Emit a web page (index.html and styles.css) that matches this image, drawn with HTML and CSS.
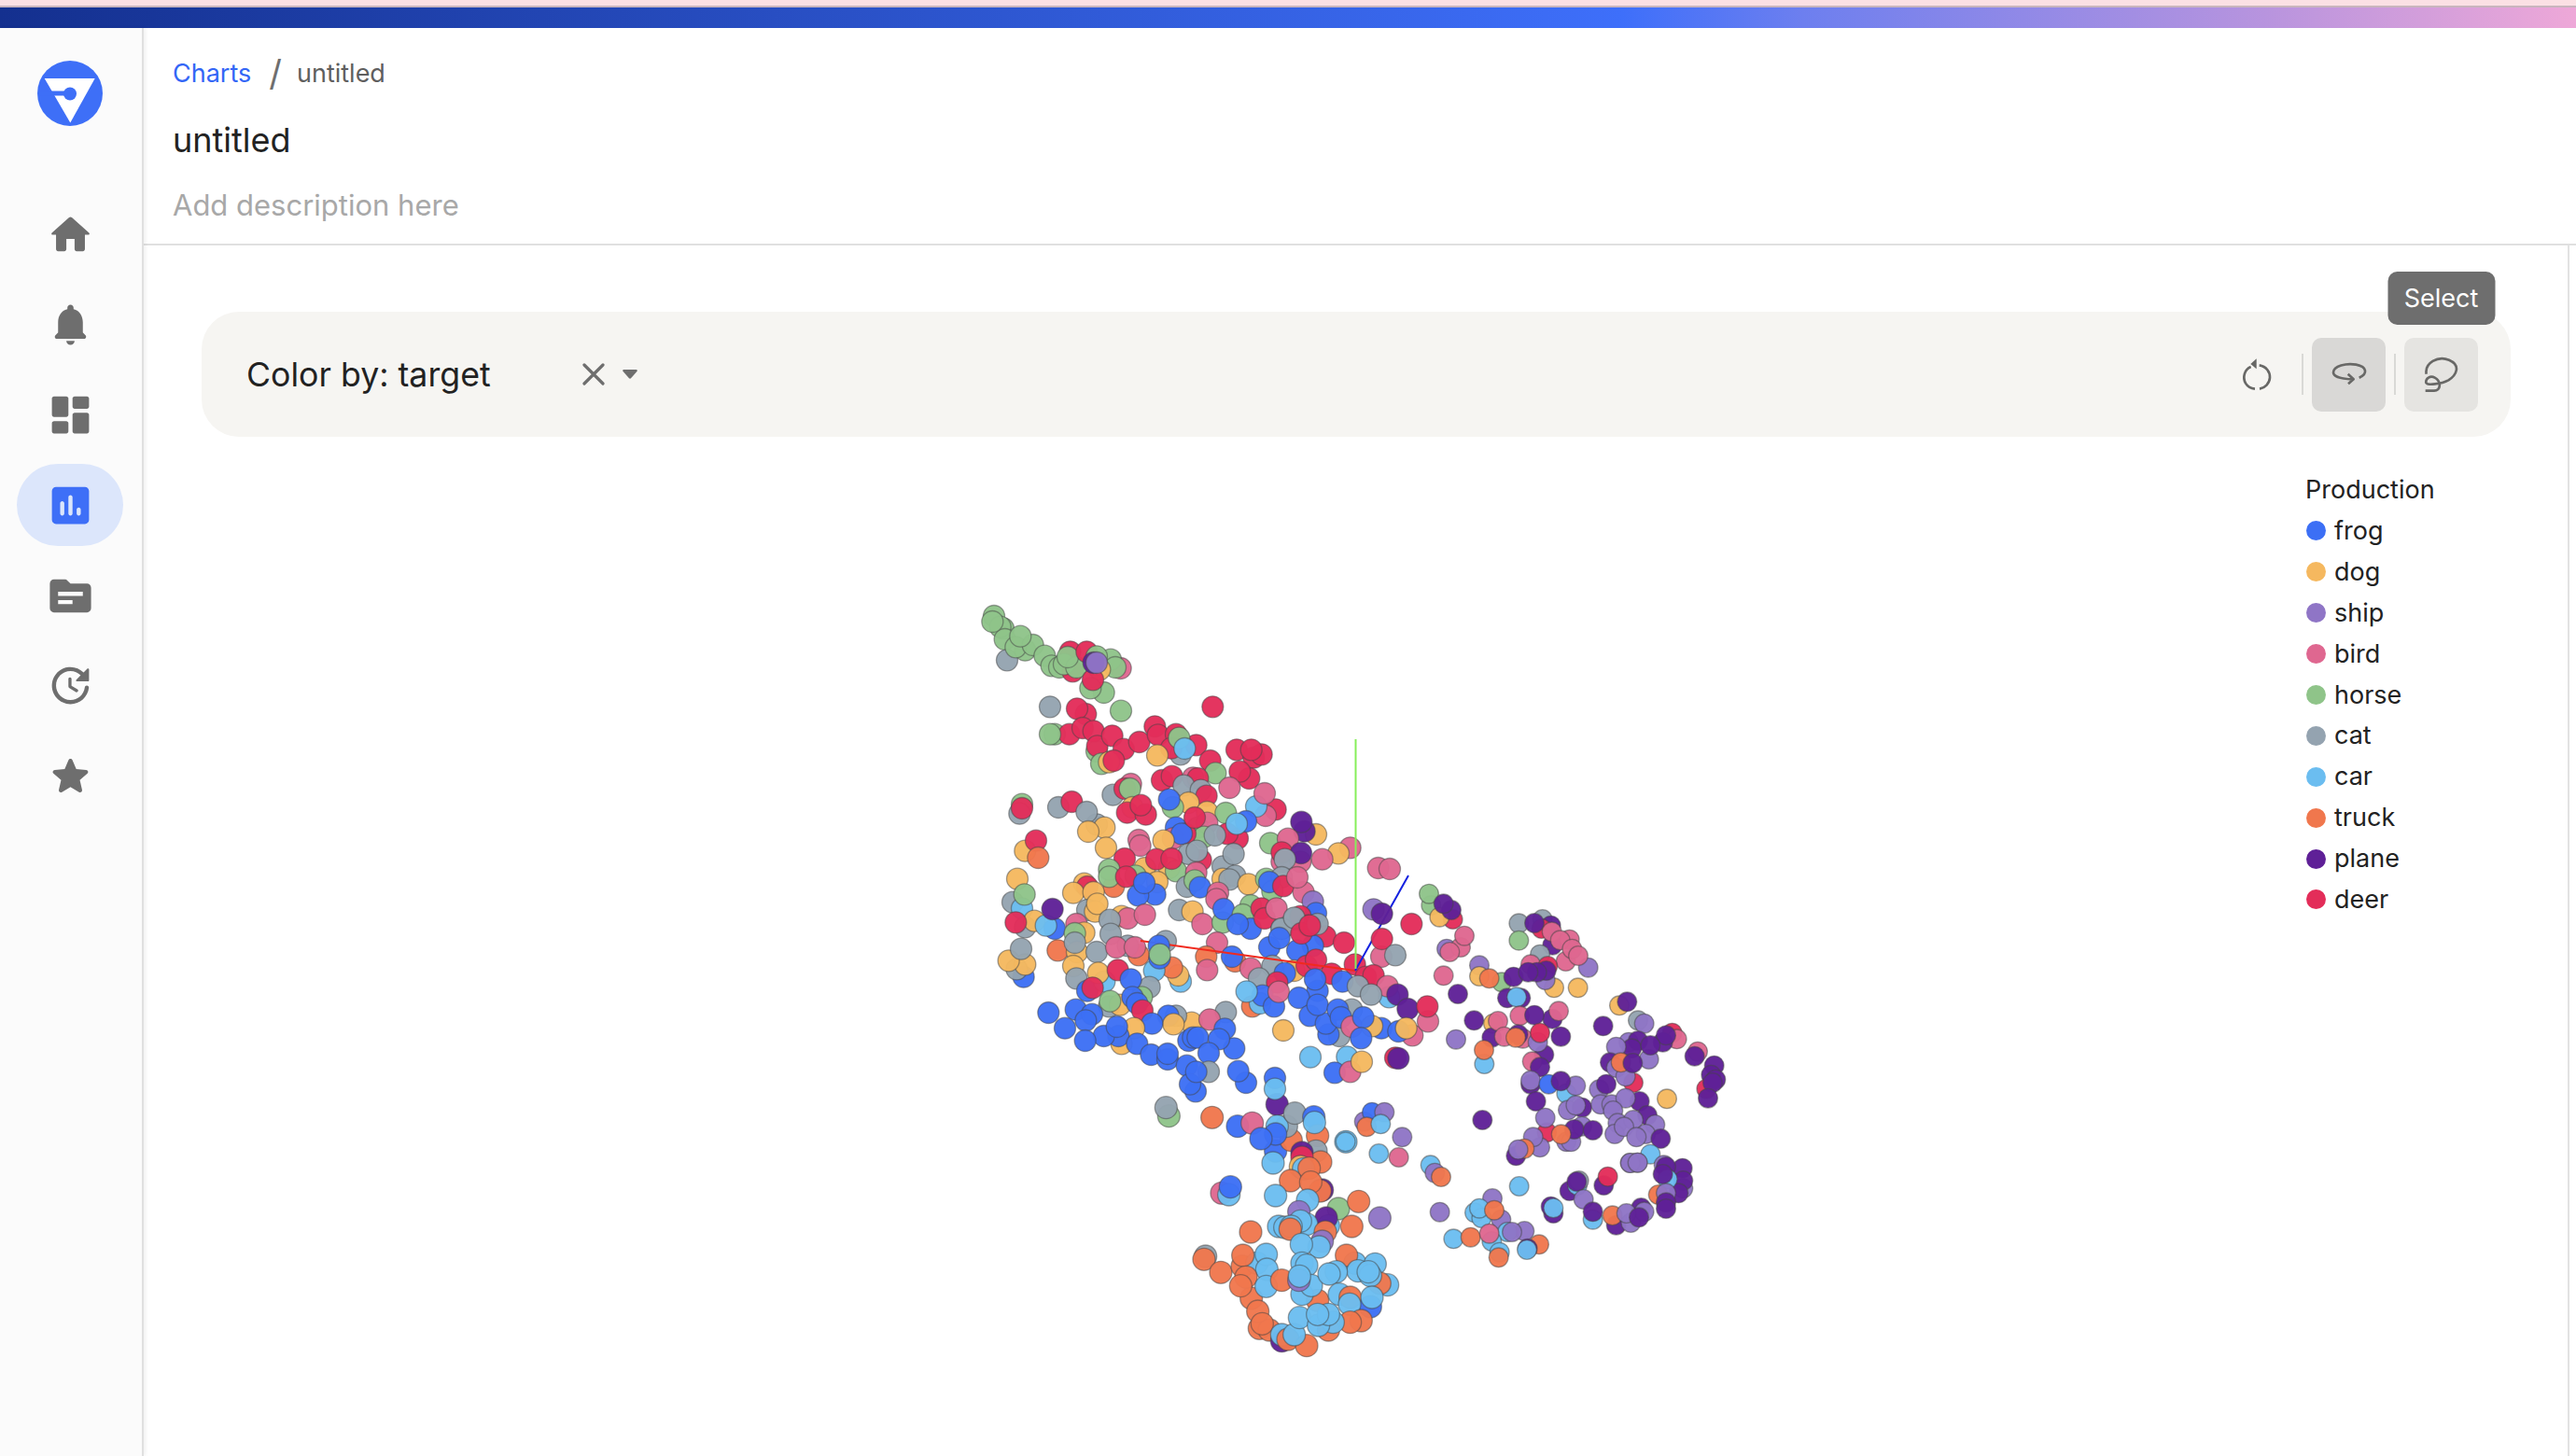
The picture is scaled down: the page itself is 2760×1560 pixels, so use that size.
FILE: index.html
```html
<!DOCTYPE html>
<html lang="en">
<head>
<meta charset="utf-8">
<title>untitled</title>
<link rel="stylesheet" href="styles.css">
</head>
<body>
<div class="app">
  <div class="topstrip"></div>
  <div class="topbar"></div>
  <div class="body">
    <aside class="sidebar">
      <svg class="logo" viewBox="0 0 70 70">
        <circle cx="35" cy="35" r="35" fill="#3e6ff7"/>
        <path d="M7.7 19h54l-26.400 47.400z" fill="#fff"/>
        <path d="M2 35h33" stroke="#3e6ff7" stroke-width="5" fill="none"/>
        <circle cx="35" cy="35.500" r="7" fill="#3e6ff7"/>
      </svg>
      <nav class="nav">
        <a class="nav-item"><svg class="nav-icon" viewBox="0 0 24 24"><path d="M10 19v-5h4v5c0 .55.45 1 1 1h3c.55 0 1-.45 1-1v-7h1.700c.46 0 .68-.57.33-.87L12.670 3.600c-.38-.34-.96-.34-1.340 0l-8.360 7.530c-.34.3-.13.87.33.87H5v7c0 .55.45 1 1 1h3c.55 0 1-.45 1-1z"/></svg></a>
        <a class="nav-item"><svg class="nav-icon" viewBox="0 0 24 24"><path d="M12 22c1.100 0 2-.9 2-2h-4c0 1.100.9 2 2 2zm6-6v-5c0-3.070-1.630-5.640-4.500-6.320V4c0-.83-.67-1.500-1.500-1.500s-1.500.67-1.500 1.500v.68C7.640 5.360 6 7.920 6 11v5l-1.290 1.290c-.63.63-.19 1.710.7 1.710h13.170c.89 0 1.340-1.080.71-1.710L18 16z"/></svg></a>
        <a class="nav-item"><svg class="nav-icon" viewBox="0 0 24 24"><path d="M4 13h6c.55 0 1-.45 1-1V4c0-.55-.45-1-1-1H4c-.55 0-1 .45-1 1v8c0 .55.45 1 1 1zm0 8h6c.55 0 1-.45 1-1v-4c0-.55-.45-1-1-1H4c-.55 0-1 .45-1 1v4c0 .55.45 1 1 1zm10 0h6c.55 0 1-.45 1-1v-8c0-.55-.45-1-1-1h-6c-.55 0-1 .45-1 1v8c0 .55.45 1 1 1zM13 4v4c0 .55.45 1 1 1h6c.55 0 1-.45 1-1V4c0-.55-.45-1-1-1h-6c-.55 0-1 .45-1 1z"/></svg></a>
        <a class="nav-item active"><svg class="nav-icon" viewBox="0 0 24 24"><path d="M19 3H5c-1.100 0-2 .9-2 2v14c0 1.100.9 2 2 2h14c1.100 0 2-.9 2-2V5c0-1.100-.9-2-2-2zM8 17c-.55 0-1-.45-1-1v-5c0-.55.45-1 1-1s1 .45 1 1v5c0 .55-.45 1-1 1zm4 0c-.55 0-1-.45-1-1V8c0-.55.45-1 1-1s1 .45 1 1v8c0 .55-.45 1-1 1zm4 0c-.55 0-1-.45-1-1v-2c0-.55.45-1 1-1s1 .45 1 1v2c0 .55-.45 1-1 1z"/></svg></a>
        <a class="nav-item"><svg class="nav-icon" viewBox="0 0 24 24"><path d="M20 6h-8l-1.410-1.410C10.210 4.210 9.700 4 9.170 4H4c-1.100 0-2 .9-2 2v12c0 1.100.9 2 2 2h16c1.100 0 2-.9 2-2V8c0-1.100-.9-2-2-2zm-7 10H6v-2h7v2zm5-4H6v-2h12v2z"/></svg></a>
        <a class="nav-item"><svg class="nav-icon" viewBox="0 0 24 24"><path d="M11 8.750v3.680c0 .35.19.68.49.86l3.120 1.850c.36.21.82.09 1.030-.26.21-.36.1-.82-.26-1.030l-2.870-1.710v-3.400c0-.4-.34-.74-.75-.74s-.76.34-.76.75zm10 .75V4.210c0-.45-.54-.67-.85-.35l-1.780 1.780c-1.810-1.810-4.390-2.850-7.210-2.600-4.190.38-7.640 3.750-8.100 7.940C2.460 16.400 6.690 21 12 21c4.590 0 8.380-3.440 8.930-7.880.07-.6-.4-1.120-1-1.120-.5 0-.92.37-.98.86-.43 3.490-3.440 6.190-7.050 6.140-3.710-.05-6.840-3.180-6.900-6.900C4.940 8.200 8.110 5 12 5c1.930 0 3.680.79 4.950 2.050l-2.090 2.090c-.32.32-.1.86.35.86h5.290c.28 0 .5-.22.5-.5z"/></svg></a>
        <a class="nav-item"><svg class="nav-icon" viewBox="0 0 24 24"><path d="M12 17.270l4.150 2.510c.76.46 1.690-.22 1.490-1.080l-1.100-4.720 3.670-3.180c.67-.58.31-1.680-.57-1.750l-4.830-.41-1.890-4.460c-.34-.81-1.500-.81-1.840 0L9.190 8.630l-4.830.41c-.88.07-1.240 1.170-.57 1.750l3.670 3.180-1.100 4.720c-.2.86.73 1.540 1.490 1.080l4.150-2.500z"/></svg></a>
      </nav>
    </aside>
    <main class="main">
      <header class="header">
        <div class="crumbs"><a class="crumb-link">Charts</a><span class="crumb-sep">/</span><span class="crumb-current">untitled</span></div>
        <h1 class="title">untitled</h1>
        <p class="desc">Add description here</p>
      </header>
      <section class="content">
        <svg class="plot" viewBox="154 263 2606 1297">
          <g class="mid" transform="translate(1030 630) scale(.33333)">
            <circle class="ho" cx="105" cy="90"/><circle class="ho" cx="135" cy="130"/><circle class="ho" cx="125" cy="125"/><circle class="ho" cx="140" cy="165"/><circle class="ho" cx="100" cy="108"/><circle class="ca" cx="147" cy="232"/><circle class="ho" cx="205" cy="200"/><circle class="ho" cx="175" cy="190"/><circle class="ho" cx="230" cy="183"/><circle class="ho" cx="190" cy="155"/><circle class="ho" cx="268" cy="218"/><circle class="ho" cx="290" cy="250"/><circle class="ho" cx="315" cy="255"/><circle class="de" cx="350" cy="205"/><circle class="de" cx="358" cy="268"/><circle class="ho" cx="330" cy="245"/><circle class="ho" cx="370" cy="255"/><circle class="ho" cx="342" cy="222"/><circle class="de" cx="403" cy="205"/><circle class="bi" cx="512" cy="258"/><circle class="ho" cx="480" cy="230"/><circle class="ho" cx="495" cy="255"/><circle class="ho" cx="435" cy="220"/><circle class="do" cx="445" cy="262"/><circle class="ho" cx="458" cy="336"/><circle class="ho" cx="415" cy="322"/><circle class="de" cx="423" cy="295"/><circle class="pl" cx="425" cy="240"/><circle class="sh" cx="435" cy="240"/>
            <circle class="ca" cx="285" cy="382"/><circle class="de" cx="400" cy="405"/><circle class="de" cx="372" cy="388"/><circle class="ho" cx="513" cy="395"/><circle class="de" cx="808" cy="382"/>
            <circle class="ho" cx="435" cy="525"/><circle class="ho" cx="300" cy="470"/><circle class="de" cx="347" cy="470"/><circle class="ho" cx="285" cy="470"/><circle class="de" cx="390" cy="450"/><circle class="de" cx="425" cy="460"/><circle class="de" cx="437" cy="508"/><circle class="de" cx="485" cy="475"/><circle class="de" cx="522" cy="518"/><circle class="de" cx="572" cy="495"/><circle class="de" cx="622" cy="445"/><circle class="de" cx="632" cy="472"/><circle class="ca" cx="705" cy="535"/><circle class="de" cx="755" cy="505"/><circle class="de" cx="690" cy="470"/><circle class="de" cx="675" cy="515"/><circle class="do" cx="630" cy="538"/><circle class="ho" cx="700" cy="482"/><circle class="cr" cx="718" cy="516"/>
            <circle class="ho" cx="450" cy="565"/><circle class="do" cx="475" cy="560"/><circle class="de" cx="490" cy="555"/>
            <circle class="de" cx="800" cy="555"/><circle class="de" cx="885" cy="520"/><circle class="de" cx="940" cy="545"/><circle class="de" cx="965" cy="535"/><circle class="de" cx="932" cy="520"/><circle class="de" cx="925" cy="612"/><circle class="ho" cx="817" cy="595"/><circle class="de" cx="895" cy="590"/><circle class="bi" cx="862" cy="642"/>
            <circle class="de" cx="645" cy="618"/><circle class="de" cx="677" cy="605"/><circle class="bi" cx="745" cy="610"/><circle class="de" cx="760" cy="612"/><circle class="ca" cx="715" cy="635"/><circle class="ca" cx="770" cy="650"/><circle class="de" cx="788" cy="668"/><circle class="do" cx="730" cy="690"/><circle class="ho" cx="680" cy="705"/><circle class="fr" cx="668" cy="680"/><circle class="do" cx="790" cy="720"/><circle class="ho" cx="850" cy="723"/>
            <circle class="bi" cx="545" cy="630"/><circle class="ca" cx="487" cy="665"/><circle class="de" cx="525" cy="645"/><circle class="ho" cx="542" cy="645"/><circle class="do" cx="550" cy="705"/><circle class="de" cx="533" cy="722"/><circle class="de" cx="593" cy="728"/><circle class="de" cx="577" cy="698"/>
            <circle class="ho" cx="195" cy="695"/><circle class="ca" cx="187" cy="725"/><circle class="de" cx="195" cy="708"/><circle class="ca" cx="312" cy="705"/><circle class="de" cx="355" cy="687"/><circle class="ca" cx="435" cy="760"/><circle class="ca" cx="403" cy="720"/><circle class="do" cx="460" cy="770"/><circle class="do" cx="408" cy="783"/>
            <circle class="de" cx="1010" cy="712"/><circle class="bi" cx="978" cy="732"/><circle class="cr" cx="948" cy="702"/><circle class="bi" cx="975" cy="660"/><circle class="de" cx="888" cy="805"/><circle class="de" cx="855" cy="790"/><circle class="fr" cx="915" cy="750"/><circle class="cr" cx="885" cy="758"/>
            <circle class="do" cx="1140" cy="792"/><circle class="pl" cx="1103" cy="782"/><circle class="pl" cx="1093" cy="752"/><circle class="ho" cx="993" cy="820"/><circle class="bi" cx="1050" cy="806"/><circle class="bi" cx="1250" cy="835"/><circle class="do" cx="1212" cy="853"/><circle class="bi" cx="1160" cy="872"/><circle class="bi" cx="1030" cy="880"/><circle class="bi" cx="1090" cy="880"/><circle class="de" cx="1030" cy="850"/><circle class="pl" cx="1092" cy="852"/><circle class="ca" cx="1040" cy="872"/><circle class="bi" cx="1340" cy="900"/><circle class="bi" cx="1377" cy="903"/>
            <circle class="fr" cx="690" cy="770"/><circle class="ho" cx="760" cy="770"/><circle class="bi" cx="790" cy="755"/><circle class="ho" cx="780" cy="800"/><circle class="ca" cx="815" cy="795"/><circle class="bi" cx="680" cy="805"/><circle class="de" cx="720" cy="790"/><circle class="fr" cx="708" cy="790"/><circle class="de" cx="750" cy="738"/>
            <circle class="do" cx="205" cy="845"/><circle class="de" cx="240" cy="812"/><circle class="tr" cx="247" cy="867"/><circle class="do" cx="465" cy="835"/><circle class="bi" cx="570" cy="810"/><circle class="bi" cx="575" cy="828"/><circle class="do" cx="650" cy="812"/><circle class="de" cx="770" cy="875"/><circle class="ca" cx="730" cy="855"/><circle class="ca" cx="757" cy="845"/><circle class="do" cx="590" cy="900"/><circle class="do" cx="668" cy="900"/><circle class="ho" cx="690" cy="910"/><circle class="de" cx="525" cy="870"/><circle class="de" cx="627" cy="872"/><circle class="de" cx="676" cy="870"/><circle class="ca" cx="840" cy="895"/><circle class="ca" cx="875" cy="855"/><circle class="do" cx="840" cy="935"/><circle class="ca" cx="880" cy="925"/><circle class="ca" cx="862" cy="937"/><circle class="do" cx="923" cy="952"/><circle class="ho" cx="980" cy="935"/>
            <circle class="do" cx="180" cy="935"/><circle class="tr" cx="490" cy="960"/><circle class="ho" cx="475" cy="905"/><circle class="ho" cx="475" cy="928"/><circle class="ho" cx="560" cy="925"/><circle class="do" cx="630" cy="945"/><circle class="de" cx="530" cy="928"/><circle class="fr" cx="623" cy="985"/><circle class="fr" cx="568" cy="988"/><circle class="fr" cx="588" cy="948"/>
            <circle class="do" cx="395" cy="950"/><circle class="de" cx="405" cy="960"/><circle class="do" cx="360" cy="980"/><circle class="do" cx="425" cy="978"/><circle class="ca" cx="725" cy="960"/><circle class="bi" cx="755" cy="915"/><circle class="ho" cx="750" cy="940"/><circle class="fr" cx="767" cy="962"/>
            <circle class="ca" cx="1030" cy="930"/><circle class="ho" cx="1000" cy="975"/><circle class="fr" cx="990" cy="945"/><circle class="de" cx="1035" cy="958"/><circle class="bi" cx="1100" cy="978"/><circle class="bi" cx="1080" cy="930"/><circle class="sh" cx="1130" cy="1008"/>
            <circle class="ca" cx="165" cy="1010"/><circle class="cr" cx="195" cy="1030"/><circle class="ho" cx="203" cy="985"/><circle class="ca" cx="205" cy="1090"/><circle class="do" cx="235" cy="1070"/><circle class="de" cx="175" cy="1075"/><circle class="fr" cx="300" cy="1095"/><circle class="cr" cx="272" cy="1085"/><circle class="pl" cx="293" cy="1032"/>
            <circle class="ca" cx="700" cy="1035"/><circle class="do" cx="743" cy="1040"/><circle class="bi" cx="775" cy="1080"/><circle class="ca" cx="405" cy="1035"/><circle class="do" cx="430" cy="1040"/><circle class="do" cx="437" cy="1015"/><circle class="do" cx="515" cy="1055"/><circle class="bi" cx="535" cy="1062"/><circle class="bi" cx="590" cy="1050"/><circle class="ca" cx="477" cy="1067"/><circle class="bi" cx="370" cy="1080"/>
            <circle class="ho" cx="840" cy="1075"/><circle class="bi" cx="825" cy="980"/><circle class="bi" cx="820" cy="1000"/><circle class="fr" cx="843" cy="1032"/><circle class="ho" cx="930" cy="1020"/><circle class="ho" cx="905" cy="1050"/><circle class="fr" cx="930" cy="1095"/><circle class="fr" cx="888" cy="1080"/><circle class="de" cx="965" cy="1030"/><circle class="de" cx="975" cy="1062"/><circle class="ca" cx="1140" cy="1080"/><circle class="fr" cx="1140" cy="1045"/><circle class="ca" cx="1070" cy="1065"/><circle class="de" cx="1090" cy="1055"/><circle class="de" cx="1115" cy="1085"/><circle class="ca" cx="1030" cy="1095"/><circle class="bi" cx="1013" cy="1030"/>
          </g>
          <g class="mid" transform="translate(1050 760) scale(.33333)">
            <circle class="do" cx="335" cy="718"/><circle class="ho" cx="305" cy="720"/><circle class="ca" cx="420" cy="722"/>
            <circle class="tr" cx="250" cy="775"/><circle class="fr" cx="140" cy="860"/><circle class="ca" cx="118" cy="835"/><circle class="do" cx="145" cy="820"/><circle class="do" cx="92" cy="808"/><circle class="ca" cx="132" cy="770"/><circle class="do" cx="312" cy="780"/><circle class="ca" cx="305" cy="750"/><circle class="ca" cx="375" cy="780"/><circle class="do" cx="300" cy="825"/>
            <circle class="ca" cx="597" cy="745"/><circle class="tr" cx="510" cy="790"/><circle class="ca" cx="475" cy="760"/><circle class="bi" cx="438" cy="765"/><circle class="bi" cx="498" cy="765"/><circle class="cr" cx="645" cy="875"/><circle class="do" cx="637" cy="855"/><circle class="tr" cx="617" cy="830"/><circle class="cr" cx="560" cy="840"/>
            <circle class="bi" cx="762" cy="750"/><circle class="tr" cx="820" cy="810"/><circle class="tr" cx="727" cy="795"/><circle class="bi" cx="730" cy="838"/><circle class="fr" cx="810" cy="795"/>
            <circle class="de" cx="1110" cy="730"/><circle class="fr" cx="1070" cy="760"/><circle class="fr" cx="1020" cy="775"/><circle class="fr" cx="930" cy="765"/><circle class="ca" cx="970" cy="705"/><circle class="fr" cx="962" cy="735"/><circle class="ca" cx="1010" cy="670"/><circle class="de" cx="1033" cy="720"/><circle class="ca" cx="1085" cy="690"/><circle class="de" cx="1060" cy="695"/>
            <circle class="do" cx="1010" cy="840"/><circle class="de" cx="1050" cy="825"/><circle class="de" cx="1080" cy="805"/><circle class="bi" cx="870" cy="833"/><circle class="ca" cx="940" cy="825"/><circle class="fr" cx="980" cy="848"/><circle class="ca" cx="897" cy="865"/><circle class="de" cx="955" cy="878"/><circle class="de" cx="1170" cy="750"/><circle class="de" cx="1130" cy="850"/>
            <circle class="de" cx="1205" cy="820"/><circle class="bi" cx="1290" cy="795"/><circle class="de" cx="1240" cy="860"/><circle class="de" cx="1265" cy="855"/>
            <circle class="tr" cx="875" cy="955"/><circle class="cr" cx="900" cy="945"/><circle class="fr" cx="908" cy="920"/><circle class="fr" cx="945" cy="955"/><circle class="cr" cx="857" cy="907"/><circle class="bi" cx="960" cy="908"/>
            <circle class="fr" cx="1085" cy="905"/><circle class="fr" cx="1077" cy="868"/><circle class="fr" cx="1025" cy="927"/><circle class="fr" cx="1060" cy="985"/><circle class="ca" cx="1155" cy="1050"/><circle class="fr" cx="1120" cy="1045"/><circle class="fr" cx="1112" cy="1010"/><circle class="fr" cx="1085" cy="950"/><circle class="ca" cx="1195" cy="965"/><circle class="fr" cx="1150" cy="965"/><circle class="fr" cx="1160" cy="990"/><circle class="bi" cx="1195" cy="1020"/><circle class="fr" cx="1290" cy="1025"/><circle class="do" cx="1260" cy="1018"/><circle class="fr" cx="1232" cy="990"/><circle class="fr" cx="1225" cy="1057"/><circle class="fr" cx="1165" cy="875"/>
            <circle class="bi" cx="1390" cy="1048"/><circle class="bi" cx="1440" cy="1003"/><circle class="cr" cx="1315" cy="925"/><circle class="bi" cx="1310" cy="890"/><circle class="pl" cx="1342" cy="917"/><circle class="pl" cx="1375" cy="963"/><circle class="de" cx="1438" cy="955"/><circle class="fr" cx="1345" cy="1035"/><circle class="do" cx="1370" cy="1025"/>
            <circle class="do" cx="975" cy="1032"/><circle class="cr" cx="1062" cy="1118"/><circle class="cr" cx="1180" cy="1117"/><circle class="fr" cx="1140" cy="1168"/><circle class="bi" cx="1190" cy="1165"/><circle class="do" cx="1227" cy="1133"/><circle class="de" cx="1335" cy="1120"/><circle class="pl" cx="1345" cy="1122"/>
            <circle class="ca" cx="310" cy="865"/><circle class="ca" cx="545" cy="893"/><circle class="fr" cx="345" cy="905"/><circle class="cr" cx="400" cy="875"/><circle class="do" cx="380" cy="847"/><circle class="de" cx="362" cy="895"/><circle class="de" cx="443" cy="838"/><circle class="ca" cx="415" cy="955"/><circle class="do" cx="450" cy="950"/><circle class="ho" cx="520" cy="925"/><circle class="ho" cx="418" cy="938"/><circle class="fr" cx="485" cy="868"/><circle class="fr" cx="490" cy="925"/><circle class="fr" cx="505" cy="945"/><circle class="de" cx="522" cy="968"/>
            <circle class="ca" cx="790" cy="973"/><circle class="do" cx="680" cy="1007"/><circle class="bi" cx="738" cy="997"/><circle class="ca" cx="630" cy="985"/><circle class="fr" cx="605" cy="985"/><circle class="do" cx="622" cy="1012"/><circle class="fr" cx="553" cy="1010"/><circle class="do" cx="495" cy="1025"/><circle class="do" cx="455" cy="1075"/><circle class="fr" cx="445" cy="1050"/>
            <circle class="fr" cx="220" cy="975"/><circle class="fr" cx="308" cy="965"/><circle class="fr" cx="360" cy="980"/><circle class="fr" cx="398" cy="1050"/><circle class="fr" cx="273" cy="1025"/><circle class="fr" cx="340" cy="1000"/><circle class="fr" cx="338" cy="1065"/><circle class="fr" cx="440" cy="1020"/><circle class="fr" cx="505" cy="1075"/>
            <circle class="fr" cx="817" cy="1090"/><circle class="fr" cx="787" cy="1027"/><circle class="fr" cx="670" cy="1065"/><circle class="fr" cx="685" cy="1055"/><circle class="fr" cx="700" cy="1055"/><circle class="fr" cx="768" cy="1060"/><circle class="fr" cx="735" cy="1105"/>
          </g>
          <path class="axis-red" d="M1222 1008L1452 1040"/>
          <path class="axis-blue" d="M1452 1040L1509 938"/>
          <path class="axis-green" d="M1452.500 792V1038"/>
          <g class="mid" transform="translate(1050 760) scale(.33333)">
            <circle class="fr" cx="575" cy="760"/><circle class="fr" cx="577" cy="800"/><circle class="ho" cx="578" cy="788"/><circle class="sh" cx="1265" cy="643"/><circle class="pl" cx="1292" cy="657"/><circle class="de" cx="1292" cy="738"/><circle class="de" cx="1387" cy="690"/><circle class="ca" cx="1335" cy="790"/><circle class="ca" cx="1215" cy="890"/><circle class="ca" cx="1257" cy="917"/>
          </g>
          <g class="mid" transform="translate(1050 1060) scale(.33333)">
            <circle class="fr" cx="550" cy="210"/><circle class="fr" cx="603" cy="225"/><circle class="fr" cx="603" cy="207"/><circle class="ca" cx="735" cy="265"/><circle class="fr" cx="665" cy="245"/><circle class="fr" cx="693" cy="328"/><circle class="fr" cx="675" cy="305"/><circle class="fr" cx="695" cy="265"/><circle class="fr" cx="855" cy="300"/><circle class="fr" cx="830" cy="263"/>
          </g>
          <g class="near" transform="translate(1220 1170) scale(.33333)">
            <circle class="ho" cx="97" cy="77"/><circle class="ca" cx="88" cy="50"/><circle class="tr" cx="236" cy="82"/><circle class="fr" cx="318" cy="110"/><circle class="bi" cx="365" cy="100"/><circle class="pl" cx="445" cy="40"/><circle class="fr" cx="440" cy="190"/><circle class="tr" cx="490" cy="155"/><circle class="ca" cx="475" cy="110"/><circle class="cr" cx="445" cy="110"/><circle class="fr" cx="440" cy="135"/><circle class="fr" cx="393" cy="150"/><circle class="ca" cx="502" cy="68"/><circle class="fr" cx="563" cy="80"/><circle class="tr" cx="575" cy="140"/><circle class="cr" cx="565" cy="98"/><circle class="cr" cx="666" cy="160"/><circle class="ca" cx="570" cy="190"/><circle class="pl" cx="525" cy="195"/><circle class="tr" cx="585" cy="225"/><circle class="de" cx="525" cy="210"/><circle class="cr" cx="432" cy="228"/><circle class="do" cx="520" cy="240"/><circle class="cr" cx="530" cy="247"/><circle class="tr" cx="548" cy="245"/>
            <circle class="tr" cx="488" cy="285"/><circle class="pl" cx="590" cy="315"/><circle class="tr" cx="583" cy="318"/><circle class="tr" cx="553" cy="290"/><circle class="cr" cx="440" cy="333"/><circle class="cr" cx="543" cy="348"/>
            <circle class="bi" cx="267" cy="325"/><circle class="cr" cx="290" cy="330"/><circle class="fr" cx="295" cy="305"/>
            <circle class="sh" cx="515" cy="385"/><circle class="ho" cx="642" cy="375"/><circle class="tr" cx="707" cy="352"/><circle class="sh" cx="775" cy="405"/><circle class="tr" cx="685" cy="432"/><circle class="cr" cx="610" cy="430"/><circle class="pl" cx="603" cy="405"/><circle class="tr" cx="360" cy="450"/><circle class="cr" cx="450" cy="432"/><circle class="cr" cx="470" cy="435"/><circle class="cr" cx="540" cy="425"/><circle class="cr" cx="520" cy="415"/><circle class="cr" cx="490" cy="432"/><circle class="tr" cx="600" cy="450"/><circle class="tr" cx="487" cy="441"/><circle class="sh" cx="590" cy="480"/><circle class="cr" cx="580" cy="498"/><circle class="cr" cx="523" cy="490"/>
            <circle class="ca" cx="215" cy="528"/><circle class="tr" cx="210" cy="538"/><circle class="tr" cx="264" cy="580"/><circle class="tr" cx="333" cy="560"/><circle class="cr" cx="380" cy="550"/><circle class="cr" cx="410" cy="522"/><circle class="tr" cx="335" cy="525"/><circle class="cr" cx="412" cy="570"/><circle class="tr" cx="362" cy="663"/><circle class="tr" cx="345" cy="595"/><circle class="tr" cx="328" cy="623"/><circle class="cr" cx="410" cy="625"/><circle class="tr" cx="460" cy="605"/><circle class="tr" cx="388" cy="760"/><circle class="tr" cx="420" cy="765"/><circle class="tr" cx="383" cy="705"/><circle class="tr" cx="397" cy="745"/><circle class="pl" cx="460" cy="800"/><circle class="cr" cx="460" cy="780"/><circle class="tr" cx="480" cy="795"/><circle class="tr" cx="540" cy="815"/><circle class="cr" cx="500" cy="780"/>
            <circle class="cr" cx="525" cy="550"/><circle class="cr" cx="540" cy="557"/><circle class="tr" cx="575" cy="670"/><circle class="cr" cx="525" cy="650"/><circle class="cr" cx="555" cy="622"/><circle class="sh" cx="515" cy="605"/><circle class="cr" cx="517" cy="592"/><circle class="cr" cx="695" cy="550"/><circle class="tr" cx="668" cy="525"/><circle class="cr" cx="760" cy="553"/><circle class="cr" cx="800" cy="620"/><circle class="tr" cx="775" cy="615"/><circle class="cr" cx="705" cy="575"/><circle class="cr" cx="745" cy="590"/><circle class="cr" cx="738" cy="578"/><circle class="cr" cx="635" cy="578"/><circle class="cr" cx="612" cy="585"/><circle class="cr" cx="645" cy="650"/><circle class="tr" cx="680" cy="660"/><circle class="fr" cx="745" cy="690"/><circle class="cr" cx="750" cy="660"/><circle class="cr" cx="678" cy="682"/>
            <circle class="tr" cx="715" cy="735"/><circle class="tr" cx="680" cy="740"/><circle class="tr" cx="610" cy="765"/><circle class="cr" cx="625" cy="740"/><circle class="cr" cx="517" cy="725"/><circle class="cr" cx="578" cy="750"/><circle class="cr" cx="610" cy="715"/><circle class="cr" cx="575" cy="715"/>
          </g>
          <g class="mid" transform="translate(1050 1060) scale(.33333)">
            <circle class="fr" cx="948" cy="285"/><circle class="cr" cx="948" cy="320"/>
          </g>
          <g class="far" transform="translate(1420 920) scale(.33333)">
            <circle class="sh" cx="125" cy="845"/><circle class="fr" cx="150" cy="815"/><circle class="sh" cx="190" cy="815"/><circle class="tr" cx="133" cy="862"/><circle class="cr" cx="178" cy="853"/><circle class="sh" cx="247" cy="895"/><circle class="cr" cx="65" cy="910"/><circle class="cr" cx="172" cy="948"/><circle class="bi" cx="236" cy="960"/><circle class="cr" cx="338" cy="985"/><circle class="sh" cx="352" cy="1010"/><circle class="tr" cx="372" cy="1023"/>
            <circle class="ho" cx="340" cy="150"/><circle class="ho" cx="333" cy="113"/><circle class="de" cx="410" cy="195"/><circle class="do" cx="367" cy="188"/><circle class="pl" cx="405" cy="165"/><circle class="pl" cx="380" cy="145"/><circle class="sh" cx="390" cy="290"/><circle class="bi" cx="435" cy="285"/><circle class="bi" cx="447" cy="248"/><circle class="bi" cx="400" cy="300"/><circle class="bi" cx="380" cy="376"/><circle class="pl" cx="426" cy="435"/>
            <circle class="ca" cx="698" cy="195"/><circle class="ca" cx="622" cy="208"/><circle class="ho" cx="622" cy="263"/><circle class="pl" cx="725" cy="215"/><circle class="de" cx="695" cy="225"/><circle class="pl" cx="672" cy="207"/><circle class="pl" cx="730" cy="278"/><circle class="bi" cx="785" cy="260"/><circle class="bi" cx="728" cy="235"/><circle class="bi" cx="755" cy="262"/><circle class="bi" cx="773" cy="330"/><circle class="bi" cx="793" cy="290"/><circle class="sh" cx="845" cy="350"/><circle class="bi" cx="813" cy="312"/>
            <circle class="do" cx="735" cy="415"/><circle class="do" cx="812" cy="415"/><circle class="ca" cx="690" cy="308"/><circle class="bi" cx="660" cy="340"/><circle class="de" cx="715" cy="345"/><circle class="ho" cx="567" cy="397"/><circle class="pl" cx="605" cy="380"/><circle class="sh" cx="707" cy="390"/><circle class="pl" cx="710" cy="360"/><circle class="pl" cx="680" cy="365"/><circle class="pl" cx="652" cy="365"/><circle class="sh" cx="495" cy="343"/><circle class="do" cx="495" cy="378"/><circle class="tr" cx="527" cy="385"/><circle class="pl" cx="585" cy="448"/><circle class="pl" cx="628" cy="448"/><circle class="cr" cx="615" cy="445"/>
            <circle class="bi" cx="625" cy="505"/><circle class="pl" cx="730" cy="515"/><circle class="pl" cx="672" cy="503"/><circle class="bi" cx="750" cy="490"/><circle class="pl" cx="478" cy="520"/><circle class="do" cx="540" cy="530"/><circle class="pl" cx="535" cy="575"/><circle class="bi" cx="555" cy="522"/><circle class="bi" cx="575" cy="572"/><circle class="bi" cx="635" cy="578"/><circle class="pl" cx="620" cy="565"/><circle class="tr" cx="612" cy="575"/><circle class="pl" cx="757" cy="572"/><circle class="sh" cx="420" cy="581"/><circle class="pl" cx="703" cy="630"/><circle class="sh" cx="683" cy="590"/><circle class="de" cx="690" cy="560"/><circle class="cr" cx="511" cy="660"/><circle class="tr" cx="510" cy="615"/><circle class="bi" cx="665" cy="652"/><circle class="pl" cx="690" cy="670"/>
            <circle class="pl" cx="660" cy="725"/><circle class="sh" cx="660" cy="713"/><circle class="fr" cx="718" cy="725"/><circle class="cr" cx="775" cy="755"/><circle class="sh" cx="805" cy="730"/><circle class="pl" cx="757" cy="715"/><circle class="sh" cx="780" cy="808"/><circle class="pl" cx="825" cy="800"/><circle class="sh" cx="805" cy="793"/><circle class="pl" cx="677" cy="780"/><circle class="pl" cx="505" cy="840"/>
            <circle class="sh" cx="825" cy="860"/><circle class="sh" cx="775" cy="910"/><circle class="sh" cx="790" cy="910"/><circle class="pl" cx="800" cy="870"/><circle class="pl" cx="860" cy="873"/><circle class="de" cx="712" cy="880"/><circle class="sh" cx="690" cy="928"/><circle class="sh" cx="707" cy="833"/><circle class="sh" cx="668" cy="895"/><circle class="tr" cx="758" cy="886"/><circle class="pl" cx="613" cy="955"/><circle class="tr" cx="640" cy="932"/><circle class="sh" cx="620" cy="935"/>
            <circle class="do" cx="945" cy="472"/><circle class="pl" cx="970" cy="460"/><circle class="ca" cx="1005" cy="520"/><circle class="sh" cx="1025" cy="530"/><circle class="pl" cx="893" cy="538"/><circle class="sh" cx="975" cy="590"/><circle class="pl" cx="1005" cy="585"/><circle class="sh" cx="1040" cy="645"/><circle class="pl" cx="985" cy="610"/><circle class="sh" cx="935" cy="605"/><circle class="pl" cx="915" cy="655"/><circle class="sh" cx="935" cy="672"/><circle class="de" cx="1115" cy="560"/><circle class="bi" cx="1130" cy="580"/><circle class="pl" cx="1085" cy="590"/><circle class="pl" cx="1095" cy="568"/><circle class="pl" cx="1045" cy="600"/><circle class="de" cx="990" cy="720"/><circle class="sh" cx="965" cy="700"/><circle class="tr" cx="950" cy="655"/><circle class="pl" cx="988" cy="657"/><circle class="bi" cx="1197" cy="620"/><circle class="pl" cx="1187" cy="635"/>
            <circle class="pl" cx="1250" cy="665"/><circle class="pl" cx="1240" cy="695"/><circle class="de" cx="1225" cy="740"/><circle class="pl" cx="1255" cy="710"/><circle class="pl" cx="1245" cy="720"/><circle class="pl" cx="1230" cy="770"/><circle class="do" cx="1098" cy="772"/>
            <circle class="sh" cx="880" cy="742"/><circle class="pl" cx="903" cy="725"/><circle class="sh" cx="885" cy="790"/><circle class="sh" cx="920" cy="790"/><circle class="pl" cx="1010" cy="780"/><circle class="sh" cx="965" cy="770"/><circle class="sh" cx="925" cy="810"/><circle class="pl" cx="1035" cy="825"/><circle class="sh" cx="940" cy="850"/><circle class="sh" cx="1060" cy="855"/><circle class="sh" cx="990" cy="840"/><circle class="sh" cx="930" cy="885"/><circle class="sh" cx="960" cy="862"/><circle class="sh" cx="1030" cy="885"/><circle class="sh" cx="1000" cy="895"/><circle class="pl" cx="1078" cy="900"/><circle class="cr" cx="1045" cy="950"/><circle class="sh" cx="980" cy="978"/><circle class="sh" cx="1003" cy="977"/>
          </g>
          <g class="far" transform="translate(1500 1170) scale(.33333)">
            <circle class="cr" cx="383" cy="303"/><circle class="sh" cx="297" cy="342"/><circle class="sh" cx="128" cy="386"/><circle class="cr" cx="240" cy="388"/><circle class="cr" cx="262" cy="405"/><circle class="sh" cx="325" cy="410"/><circle class="cr" cx="255" cy="374"/><circle class="tr" cx="303" cy="380"/><circle class="sh" cx="400" cy="447"/><circle class="cr" cx="345" cy="450"/><circle class="cr" cx="295" cy="480"/><circle class="cr" cx="320" cy="515"/><circle class="cr" cx="172" cy="472"/><circle class="tr" cx="227" cy="467"/><circle class="bi" cx="287" cy="455"/><circle class="sh" cx="360" cy="450"/><circle class="tr" cx="317" cy="532"/><circle class="tr" cx="447" cy="490"/><circle class="pl" cx="410" cy="503"/><circle class="cr" cx="408" cy="507"/>
            <circle class="pl" cx="493" cy="390"/><circle class="pl" cx="485" cy="368"/><circle class="cr" cx="493" cy="373"/>
            <circle class="pl" cx="545" cy="318"/><circle class="cr" cx="570" cy="300"/><circle class="ca" cx="575" cy="285"/><circle class="pl" cx="568" cy="288"/><circle class="pl" cx="655" cy="300"/><circle class="de" cx="668" cy="272"/><circle class="sh" cx="590" cy="345"/><circle class="cr" cx="620" cy="410"/><circle class="pl" cx="620" cy="385"/><circle class="pl" cx="695" cy="428"/><circle class="sh" cx="742" cy="420"/><circle class="tr" cx="683" cy="397"/><circle class="pl" cx="775" cy="372"/><circle class="sh" cx="785" cy="385"/><circle class="sh" cx="728" cy="390"/><circle class="pl" cx="768" cy="403"/>
            <circle class="sh" cx="740" cy="228"/><circle class="sh" cx="764" cy="227"/><circle class="pl" cx="908" cy="245"/><circle class="sh" cx="848" cy="235"/><circle class="pl" cx="855" cy="240"/><circle class="sh" cx="910" cy="310"/><circle class="pl" cx="910" cy="285"/><circle class="pl" cx="895" cy="325"/><circle class="cr" cx="860" cy="280"/><circle class="pl" cx="845" cy="264"/><circle class="tr" cx="830" cy="330"/><circle class="sh" cx="855" cy="325"/><circle class="pl" cx="855" cy="355"/><circle class="pl" cx="855" cy="375"/>
          </g>
        </svg>
        <div class="toolbar">
          <div class="select">
            <span class="select-label">Color by: target</span>
            <svg class="select-clear" viewBox="0 0 24 24"><path d="M2 2L22 22M22 2L2 22"/></svg>
            <svg class="select-caret" viewBox="0 0 16 10"><path d="M1.500 0h13c1.200 0 1.600 1.200.9 2L9 9.300c-.5.5-1.500.5-2 0L.6 2C-.1 1.200.3 0 1.500 0z"/></svg>
          </div>
          <div class="tools">
            <button class="tool"><svg class="tool-icon" viewBox="174 361 120 120"><path d="M215 397C195 405 187 430 198 450 204 460 215 467 228 468M242 392C265 395 277 415 276 432 275 450 260 465 243 468"/><path class="tool-fill" d="M233 371V404L214 388z"/></svg></button>
            <span class="tool-sep"></span>
            <button class="tool selected"><svg class="tool-icon" viewBox="470 361 120 120"><path d="M562 432C590 420 588 397 552 390 520 384 480 395 479 415 479 430 510 436 540 437M526 420L544 437 527 452"/></svg></button>
            <span class="tool-sep"></span>
            <button class="tool hovered"><svg class="tool-icon" viewBox="767 361 120 120"><path d="M775 474H803C825 474 827 444 805 432 791 424 775 434 777 448 781 458 827 452 849 440 875 424 890 392 851 375 815 360 772 385 778 420"/></svg><span class="tooltip">Select</span></button>
          </div>
        </div>
        <div class="legend-row">
          <div class="legend">
            <div class="legend-title">Production</div>
            <div class="legend-item"><span class="dot fr-bg"></span>frog</div>
            <div class="legend-item"><span class="dot do-bg"></span>dog</div>
            <div class="legend-item"><span class="dot sh-bg"></span>ship</div>
            <div class="legend-item"><span class="dot bi-bg"></span>bird</div>
            <div class="legend-item"><span class="dot ho-bg"></span>horse</div>
            <div class="legend-item"><span class="dot ca-bg"></span>cat</div>
            <div class="legend-item"><span class="dot cr-bg"></span>car</div>
            <div class="legend-item"><span class="dot tr-bg"></span>truck</div>
            <div class="legend-item"><span class="dot pl-bg"></span>plane</div>
            <div class="legend-item"><span class="dot de-bg"></span>deer</div>
          </div>
        </div>
      </section>
    </main>
  </div>
</div>
</body>
</html>
```
FILE: styles.css
```css
* { box-sizing: border-box; }
html, body { margin: 0; height: 100%; overflow: hidden; background: #fff; }
body { font-family: Inter, "Liberation Sans", sans-serif; color: #222; }
.app { display: flex; flex-direction: column; height: 100vh; }
.topstrip { height: 8px; background: #fbe0e4; border-bottom: 2px solid #c9b5bd; flex: none; }
.topbar { height: 22px; flex: none; background: linear-gradient(90deg, #14308f 0%, #3e6ffa 63%, #6d7fef 70%, #b894de 88%, #eea8d8 100%); }
.body { flex: 1; display: flex; min-height: 0; }

.sidebar { width: 154px; flex: none; background: #fbfbfb; border-right: 2px solid #e0e0e0; box-shadow: 2px 0 4px rgba(0,0,0,.06); display: flex; flex-direction: column; align-items: center; padding: 35px 2px 0 0; position: relative; z-index: 2; }
.logo { width: 70px; height: 70px; display: block; flex: none; }
.nav { margin-top: 72px; display: flex; flex-direction: column; gap: 8.800px; width: 100%; padding: 0 18px; }
.nav-item { height: 88px; flex: none; display: flex; align-items: center; justify-content: center; border-radius: 44px; }
.nav-item.active { background: #dce6fb; }
.nav-icon { width: 53px; height: 53px; fill: #6e6e6e; display: block; }
.active .nav-icon { fill: #3e6ff7; }

.main { flex: 1; min-width: 0; display: flex; flex-direction: column; }
.header { flex: none; height: 233px; padding: 28px 31px 0; border-bottom: 2px solid #e0e0e0; }
.crumbs { display: flex; align-items: center; height: 40px; font-size: 27px; }
.crumb-link { color: #3366f6; }
.crumb-sep { color: #6e6e6e; margin: 0 16px 0 19px; font-size: 38px; font-weight: 400; }
.crumb-current { color: #5f5f5f; }
.title { margin: 28px 0 0; font-size: 36px; line-height: 48px; font-weight: 400; color: #222; }
.desc { margin: 24px 0 0; font-size: 31px; line-height: 44px; color: #a8a8a8; }

.content { flex: 1; position: relative; padding: 71px 70px 0 62px; min-height: 0; }
.content::after { content: ""; position: absolute; top: 0; bottom: 0; right: 7px; width: 2px; background: #e2e2e2; }
.plot { position: absolute; left: 0; top: 0; width: 2606px; height: 1297px; display: block; }
.plot circle { stroke: rgba(70,70,70,.5); stroke-width: 4px; fill-opacity: .96; }
.mid circle { r: 34.500px; }
.near circle { r: 36px; }
.far circle { r: 31px; }
.fr { fill: #3c6ff5; } .do { fill: #f5b85f; } .sh { fill: #8f75c6; } .bi { fill: #df6790; } .ho { fill: #8fc489; }
.ca { fill: #94a3b0; } .cr { fill: #6bbdf0; } .tr { fill: #f0774d; } .pl { fill: #5f2097; } .de { fill: #e32d59; }
.axis-red, .axis-blue, .axis-green { fill: none; stroke-width: 2px; }
.axis-red { stroke: #f02a1e; }
.axis-blue { stroke: #1220e0; }
.axis-green { stroke: #86ee5a; }

.toolbar { position: relative; height: 134px; background: #f6f5f2; border-radius: 40px; display: flex; align-items: center; justify-content: space-between; padding: 0 35px 0 48px; }
.select { display: flex; align-items: center; width: 419px; }
.select-label { font-size: 35.700px; color: #222; flex: 1; }
.select-clear { width: 24px; height: 24px; fill: none; stroke: #6e6e6e; stroke-width: 3.200px; stroke-linecap: round; }
.select-caret { width: 16px; height: 10px; fill: #6e6e6e; margin-left: 19px; }
.tools { display: flex; align-items: center; gap: 9px; }
.tool { position: relative; width: 79px; height: 79px; border: 0; padding: 0; border-radius: 10px; background: none; display: flex; align-items: center; justify-content: center; font: inherit; }
.tool.selected { background: #d9d8d6; }
.tool.hovered { background: #e5e4e1; }
.tool-icon { width: 40px; height: 40px; fill: none; stroke: #686866; stroke-width: 8px; stroke-linecap: butt; stroke-linejoin: round; }
.tool-fill { fill: #686866; stroke: none; }
.tool-sep { width: 2px; height: 44px; background: #d9d9d6; }
.tooltip { position: absolute; left: 50%; bottom: calc(100% + 14px); transform: translateX(-50%); width: 115px; height: 57px; border-radius: 10px; background: #6e6e6e; color: #fff; font-size: 27px; display: flex; align-items: center; justify-content: center; }

.legend-row { position: relative; display: flex; justify-content: flex-end; margin-top: 35px; }
.legend { width: 220px; font-size: 27px; line-height: 44px; color: #222; }
.legend-title { height: 44px; }
.legend-item { height: 43.900px; display: flex; align-items: center; gap: 9px; padding-left: 1px; }
.dot { width: 21px; height: 21px; border-radius: 50%; flex: none; }
.fr-bg { background: #3c6ff5; } .do-bg { background: #f5b85f; } .sh-bg { background: #8f75c6; } .bi-bg { background: #df6790; } .ho-bg { background: #8fc489; }
.ca-bg { background: #94a3b0; } .cr-bg { background: #6bbdf0; } .tr-bg { background: #f0774d; } .pl-bg { background: #5f2097; } .de-bg { background: #e32d59; }
```
